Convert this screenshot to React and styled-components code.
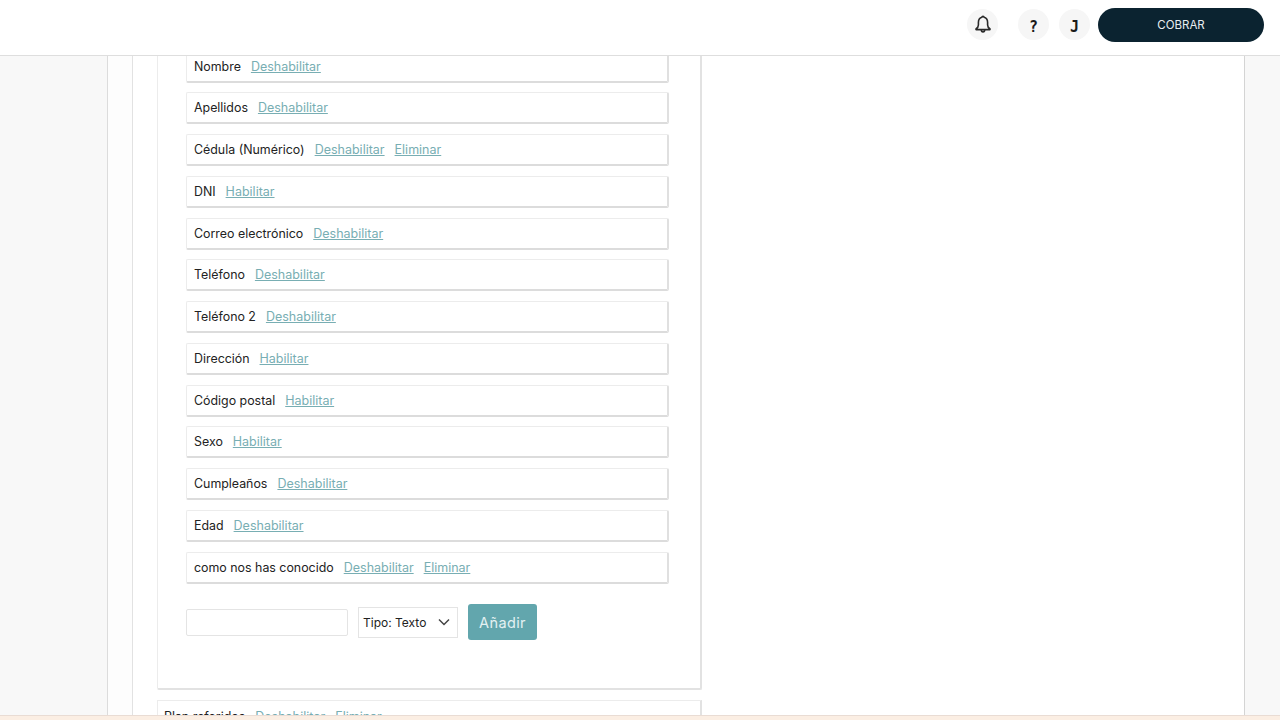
import React from 'react';
import styled, { createGlobalStyle } from 'styled-components';

const GlobalStyle = createGlobalStyle`
  html, body { margin: 0; padding: 0; height: 100%; overflow: hidden; background: #fff; }
  * { box-sizing: border-box; }
  body { font-family: "Inter", "Open Sans", "Liberation Sans", sans-serif; color: #111; }
`;

const Page = styled.div`
  height: 720px;
  display: flex;
  flex-direction: column;
`;

const Header = styled.header`
  height: 56px;
  flex: none;
  display: flex;
  align-items: center;
  justify-content: flex-end;
  padding: 0 16px 6px 0;
  background: #fff;
  border-bottom: 1px solid #dedede;
`;

const RoundIcon = styled.div`
  width: 31px;
  height: 31px;
  border-radius: 50%;
  background: #f6f6f6;
  display: flex;
  align-items: center;
  justify-content: center;
  margin-left: ${({ $gap }) => $gap}px;
  color: #1a1a1a;
  font-family: "DejaVu Sans Mono", monospace;
  font-size: 15px;
  font-weight: 700;
  padding-top: ${({ $low }) => ($low ? 4 : 0)}px;
  padding-bottom: ${({ $raised }) => ($raised ? 2 : 0)}px;
`;

const ChargeButton = styled.button`
  width: 166px;
  height: 34px;
  margin-left: 8px;
  border: 0;
  border-radius: 17px;
  background: #0b2330;
  color: #e8edf0;
  font-family: inherit;
  font-size: 11.5px;
  font-weight: 400;
`;

const Body = styled.div`
  flex: 1;
  min-height: 0;
  overflow: hidden;
  background: #f8f8f8;
  padding: 0 35px 0 107px;
`;

const Panel = styled.main`
  height: 100%;
  background: #fdfdfd;
  border-left: 1px solid #dcdcdc;
  border-right: 1px solid #d4d4d4;
  padding-left: 24px;
`;

const Inner = styled.div`
  display: flow-root;
  height: 100%;
  background: #fff;
  border-left: 1px solid #e2e2e2;
  padding-left: 24px;
`;

const Card = styled.section`
  width: 545px;
  height: 639.4px;
  background: #fff;
  border-right: 2px solid #e2e2e2;
  border-bottom: 2px solid #e2e2e2;
  border-left: 1px solid #ececec;
  border-radius: 2px;
  padding: 0 31px 0 28px;
`;

const RowList = styled.div`
  display: flex;
  flex-direction: column;
  gap: 9.75px;
  margin-top: -5.4px;
`;

const FieldRow = styled.div`
  height: 32px;
  display: flex;
  align-items: center;
  gap: 10px;
  padding-left: 7px;
  background: #fff;
  border: 1px solid #ececec;
  border-right: 2px solid #e0e0e0;
  border-bottom: 2px solid #dcdcdc;
  border-radius: 2px;
  font-size: 12.4px;
  white-space: nowrap;
`;

const FieldName = styled.span`
  color: #222;
`;

const ActionLink = styled.a`
  color: #78aeb3;
  font-size: 12.5px;
  text-decoration: underline;
  cursor: pointer;
`;

const AddForm = styled.form`
  display: flex;
  align-items: center;
  gap: 10px;
  margin-top: 20.5px;
`;

const NameInput = styled.input`
  width: 162px;
  height: 27px;
  border: 1px solid #e4e4e4;
  border-radius: 2px;
  background: #fff;
`;

const TypeSelect = styled.div`
  width: 100px;
  height: 31px;
  display: flex;
  align-items: center;
  justify-content: space-between;
  padding: 0 7px 0 4px;
  border: 1px solid #e4e4e4;
  font-size: 12px;
  color: #222;
`;

const AddButton = styled.button`
  width: 69px;
  height: 36px;
  border: 0;
  border-radius: 3px;
  background: #62a6ad;
  color: #e4f1f2;
  font-family: inherit;
  font-size: 14.5px;
  letter-spacing: 0.4px;
`;

const NextCard = styled.div`
  width: 545px;
  height: 32px;
  margin-top: 10px;
  display: flex;
  align-items: center;
  gap: 10px;
  padding-left: 6px;
  background: #fff;
  border: 1px solid #ececec;
  border-right: 2px solid #e2e2e2;
  font-size: 12.4px;
  white-space: nowrap;
`;

const BottomStrip = styled.div`
  height: 5px;
  flex: none;
  background: #fbeee3;
  border-top: 1px solid #e9dcd4;
`;

const BellIcon = () => (
  <svg width="16" height="18" viewBox="0 0 16 18" fill="none" stroke="#2a2a2a" strokeWidth="1.6" strokeLinejoin="round">
    <path d="M8 1.2 C8.6 1.2 9 1.6 9 2.2 C11.5 2.8 12.6 4.8 12.6 7.4 V10 C12.6 12 13.6 13 15 14 V14.6 H1 V14 C2.4 13 3.4 12 3.4 10 V7.4 C3.4 4.8 4.5 2.8 7 2.2 C7 1.6 7.4 1.2 8 1.2 Z" />
    <path d="M6.3 14.8 C6.3 16 7 16.9 8 16.9 C9 16.9 9.7 16 9.7 14.8" />
  </svg>
);

const fields = [
  { name: 'Nombre', actions: ['Deshabilitar'] },
  { name: 'Apellidos', actions: ['Deshabilitar'] },
  { name: 'Cédula (Numérico)', actions: ['Deshabilitar', 'Eliminar'] },
  { name: 'DNI', actions: ['Habilitar'] },
  { name: 'Correo electrónico', actions: ['Deshabilitar'] },
  { name: 'Teléfono', actions: ['Deshabilitar'] },
  { name: 'Teléfono 2', actions: ['Deshabilitar'] },
  { name: 'Dirección', actions: ['Habilitar'] },
  { name: 'Código postal', actions: ['Habilitar'] },
  { name: 'Sexo', actions: ['Habilitar'] },
  { name: 'Cumpleaños', actions: ['Deshabilitar'] },
  { name: 'Edad', actions: ['Deshabilitar'] },
  { name: 'como nos has conocido', actions: ['Deshabilitar', 'Eliminar'] },
];

export default function App() {
  return (
    <Page>
      <GlobalStyle />
      <Header>
        <RoundIcon $gap={0} $raised>
          <BellIcon />
        </RoundIcon>
        <RoundIcon $gap={20} $low>?</RoundIcon>
        <RoundIcon $gap={10} $low>J</RoundIcon>
        <ChargeButton>COBRAR</ChargeButton>
      </Header>
      <Body>
        <Panel>
          <Inner>
            <Card>
              <RowList>
                {fields.map((f) => (
                  <FieldRow key={f.name}>
                    <FieldName>{f.name}</FieldName>
                    {f.actions.map((a) => (
                      <ActionLink key={a}>{a}</ActionLink>
                    ))}
                  </FieldRow>
                ))}
              </RowList>
              <AddForm>
                <NameInput />
                <TypeSelect>
                  Tipo: Texto
                  <svg width="12" height="8" viewBox="0 0 12 8" fill="none" stroke="#444" strokeWidth="1.5">
                    <path d="M1 1.5 L6 6.5 L11 1.5" />
                  </svg>
                </TypeSelect>
                <AddButton type="button">Añadir</AddButton>
              </AddForm>
            </Card>
            <NextCard>
              <FieldName>Plan referidos</FieldName>
              <ActionLink>Deshabilitar</ActionLink>
              <ActionLink>Eliminar</ActionLink>
            </NextCard>
          </Inner>
        </Panel>
      </Body>
      <BottomStrip />
    </Page>
  );
}
